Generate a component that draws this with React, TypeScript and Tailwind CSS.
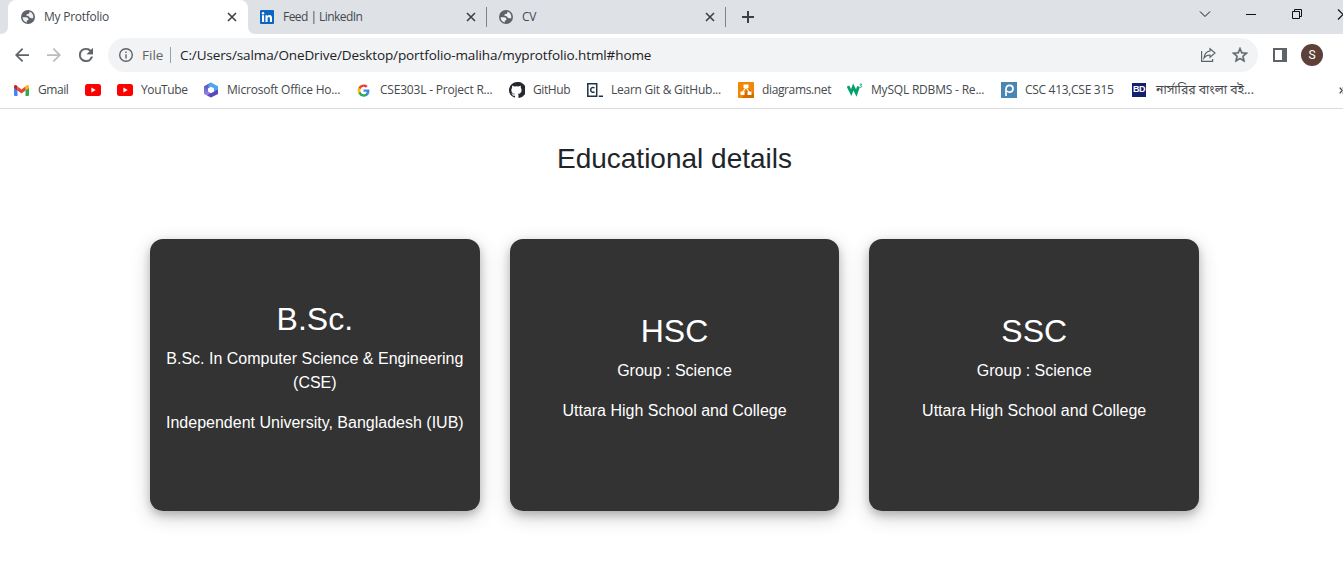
import React from "react";

const ui = "font-['Open_Sans','Noto_Sans',sans-serif]";

function Globe() {
  return (
    <svg className="size-[14px] shrink-0" viewBox="0 0 14 14">
      <circle cx="7" cy="7" r="7" fill="#5f6368" />
      <path d="M1.600 7.200H5c2 0 2.400 1.200 2.400 2 0 1-.6 1.400-1.600 1.400v1.800C3 11.800 1.600 9.600 1.600 7.200zM8.400 1.600C8.600 3.200 8.200 4 7 4 5.800 4 5.200 4.600 5.200 5.600c1.800 0 2.600.8 3.400 2 .6.800 1.800.6 3.600.6C12.800 5 11 2.400 8.400 1.600z" fill="#eef0f2" />
    </svg>
  );
}

function Close() {
  return (
    <svg className="size-[10px] shrink-0" viewBox="0 0 10 10" stroke="#3c4043" strokeWidth="1.600">
      <path d="M1 1l8 8M9 1L1 9" />
    </svg>
  );
}

function YouTube() {
  return (
    <svg className="h-[12px] w-4 shrink-0" viewBox="0 0 16 12">
      <rect width="16" height="12" rx="2.500" fill="#f00" />
      <path d="M6.400 3.500v5L10.700 6z" fill="#fff" />
    </svg>
  );
}

function Tabs() {
  return (
    <div className="flex h-[34px] bg-[#dee1e6]">
      <div className="flex w-2 items-end bg-white">
        <div className="h-full w-full rounded-br-[7px] bg-[#dee1e6]" />
      </div>
      <div className="flex h-full w-60 items-center rounded-t-lg bg-white pl-[13px] pr-[11px]">
        <Globe />
        <span className="ml-[9px] flex-1 tracking-[-0.25px]">My Protfolio</span>
        <Close />
      </div>
      <div className="flex w-2 bg-white">
        <div className="h-full w-full rounded-bl-[7px] bg-[#dee1e6]" />
      </div>
      <div className="flex w-[230px] items-center pl-1 pr-[10px]">
        <svg className="size-[14px] shrink-0" viewBox="0 0 14 14">
          <rect width="14" height="14" rx="1" fill="#0a66c2" />
          <path d="M2 5.300h2.100V12H2zM5.500 5.300h2v.9c.4-.7 1.100-1.100 2-1.100 2 0 2.500 1.300 2.500 3.200V12H9.900V8.700c0-.9-.1-1.700-1.100-1.700S7.600 7.800 7.600 8.700V12H5.500z" fill="#fff" />
          <circle cx="3.050" cy="3.200" r="1.200" fill="#fff" />
        </svg>
        <span className="ml-[9px] flex-1 tracking-[-0.55px]">Feed | LinkedIn</span>
        <Close />
      </div>
      <div className="my-[7px] w-px bg-[#808388]" />
      <div className="flex w-[238px] items-center pl-3 pr-[10px]">
        <Globe />
        <span className="ml-[9px] flex-1 tracking-[-0.3px]">CV</span>
        <Close />
      </div>
      <div className="my-[7px] w-px bg-[#808388]" />
      <div className="flex items-center pl-4">
        <svg className="size-3" viewBox="0 0 12 12" stroke="#3c4043" strokeWidth="2">
          <path d="M6 0v12M0 6h12" />
        </svg>
      </div>
      <div className="ml-auto flex w-[144px] pt-2">
        <svg className="h-3 w-[144px]" viewBox="0 0 144 12" fill="none" stroke="#111" strokeWidth="1">
          <path d="M1 3.500l5 5 5-5M47 6.500h10M93.500 3.500h7v7h-7zM95.500 3.500v-2h7v7h-2" />
          <path d="M139 1.500l10 10M139 11.500l10-10" strokeWidth="1.200" />
        </svg>
      </div>
    </div>
  );
}

function Toolbar() {
  return (
    <div className="flex h-[42px] items-center">
      <svg className="ml-[15px] size-[14px]" viewBox="4 4 16 16" fill="#5f6368">
        <path d="M20 11H7.830l5.590-5.590L12 4l-8 8 8 8 1.410-1.410L7.830 13H20v-2z" />
      </svg>
      <svg className="ml-[18px] size-[14px]" viewBox="4 4 16 16" fill="#babcbe">
        <path d="M12 4l-1.410 1.410L16.170 11H4v2h12.170l-5.580 5.590L12 20l8-8z" />
      </svg>
      <svg className="ml-[18px] size-[14px]" viewBox="4 4 16 16" fill="#5f6368" stroke="#5f6368" strokeWidth=".4">
        <path d="M17.650 6.350A7.950 7.950 0 0 0 12 4a8 8 0 1 0 7.730 10h-2.080A6 6 0 1 1 12 6c1.660 0 3.140.690 4.220 1.780L13 11h7V4l-2.350 2.350z" />
      </svg>
      <div className="ml-[15px] flex h-[34px] w-[1150px] items-center rounded-full bg-[#f1f3f4] pl-[11px] pr-[10px] text-[14px]">
        <svg className="size-[14px]" viewBox="2 2 20 20" fill="#5f6368">
          <path d="M11 7h2v2h-2zm0 4h2v6h-2zm1-9a10 10 0 1 0 0 20 10 10 0 0 0 0-20zm0 18a8 8 0 1 1 0-16 8 8 0 0 1 0 16z" />
        </svg>
        <span className="ml-[9px] w-[20px] whitespace-nowrap pt-px text-[13.500px] text-[#5f6368]">File</span>
        <div className="ml-2 h-4 w-px bg-[#9aa0a6]" />
        <span className="ml-[9px] flex-1 whitespace-nowrap pt-px text-[13.500px] tracking-[-0.11px] text-[#202124]">C:/Users/salma/OneDrive/Desktop/portfolio-maliha/myprotfolio.html#home</span>
        <svg className="size-4" viewBox="0 0 16 16" fill="none" stroke="#5f6368" strokeWidth="1.200">
          <path d="M1.600 4v10.400h11V12M10 1.800l5 4.200-5 4.200V8C7 8 5.400 9 4 11c.4-4 2.500-6.500 6-7z" />
        </svg>
        <svg className="ml-4 size-4" viewBox="2 2 20 20" fill="#5f6368" stroke="#5f6368" strokeWidth=".4">
          <path d="M22 9.240l-7.190-.620L12 2 9.190 8.630 2 9.240l5.460 4.730L5.820 21 12 17.270 18.180 21l-1.630-7.030L22 9.240zM12 15.400l-3.760 2.270 1-4.280-3.320-2.880 4.380-.380L12 6.100l1.710 4.040 4.380.380-3.320 2.880 1 4.280L12 15.400z" />
        </svg>
      </div>
      <svg className="ml-[15px] h-[14px] w-[14px]" viewBox="0 0 14 14">
        <path fillRule="evenodd" fill="#5f6368" d="M0 0h14v14H0zM2 2v10h7V2z" />
      </svg>
      <div className="ml-[14px] flex size-[22px] items-center justify-center rounded-full bg-[#5d4037] font-[Roboto,sans-serif] text-[12px] text-white">S</div>
    </div>
  );
}

function Bookmark({ w, gap, icon, children, text }: { w: string; gap: string; icon: React.ReactNode; children?: React.ReactNode; text: string }) {
  return (
    <div className={`flex shrink-0 items-center ${w} ${gap}`}>
      {icon}
      <span className={`whitespace-nowrap ${text}`}>{children}</span>
    </div>
  );
}

function Bookmarks() {
  return (
    <div className="flex h-[33px] items-center overflow-hidden border-b border-[#dadce0] pb-1 pl-[14px]">
      <Bookmark w="w-[71px]" gap="gap-[9px]" text="tracking-[-0.45px]" icon={
        <svg className="h-[11px] w-[15px] shrink-0" viewBox="0 0 15 11">
          <path d="M0 2v8a1 1 0 0 0 1 1h2.500V4z" fill="#4285f4" />
          <path d="M15 2v8a1 1 0 0 1-1 1h-2.500V4z" fill="#34a853" />
          <path d="M11.500 1.400V5.500L15 3V1.600C15 0 13.300-.5 12.200.5z" fill="#fbbc04" />
          <path d="M0 1.600V3l3.500 2.500V1.400L2.800.5C1.700-.5 0 0 0 1.600z" fill="#c5221f" />
          <path d="M3.500 1.400l4 3 4-3v4.100l-4 3-4-3z" fill="#ea4335" />
        </svg>}>Gmail</Bookmark>
      <Bookmark w="w-8" gap="gap-0" text="" icon={<YouTube />} />
      <Bookmark w="w-[86px]" gap="gap-2" text="tracking-[-0.4px]" icon={<YouTube />}>YouTube</Bookmark>
      <Bookmark w="w-[153px]" gap="gap-2" text="tracking-[-0.2px]" icon={
        <svg className="h-4 w-4 shrink-0" viewBox="0 0 16 16">
          <defs>
            <linearGradient id="officeLeft" x1="0" y1="0" x2="0" y2="1">
              <stop offset="0" stopColor="#3454b4" />
              <stop offset="1" stopColor="#b58af0" />
            </linearGradient>
          </defs>
          <path d="M8 .5L1 4.300v7.600L8 15.500 8 11 5.200 9.500v-3L9 4z" fill="url(#officeLeft)" />
          <path d="M8 .5l7 3.800v5.500L10.800 9.500v-3L8 5 5.500 6V2z" fill="#55a5ee" />
          <path d="M15 7.500v4.400L8 15.500l-4-2.200L10.800 9.500z" fill="#5a48bd" />
          <path d="M8 5l2.800 1.500v3L8 11 5.200 9.500v-3z" fill="#fff" />
        </svg>}>Microsoft Office Ho...</Bookmark>
      <Bookmark w="w-[153px]" gap="gap-[10px]" text="tracking-[-0.2px]" icon={
        <svg className="ml-[1px] size-[13px] shrink-0" viewBox="0 0 24 24">
          <path fill="#4285f4" d="M23 12.300c0-.8-.1-1.500-.2-2.300H12v4.500h6.200a5.300 5.300 0 0 1-2.300 3.500v2.900h3.700c2.200-2 3.400-5 3.400-8.600z" />
          <path fill="#34a853" d="M12 23.500c3.100 0 5.700-1 7.600-2.800l-3.700-2.900c-3.600 2.300-8.100.7-9.400-3.300H2.700v3a11.500 11.500 0 0 0 9.300 6z" />
          <path fill="#fbbc05" d="M6.500 14.500a7 7 0 0 1 0-5v-3H2.700a11.500 11.500 0 0 0 0 11z" />
          <path fill="#ea4335" d="M12 5.100c1.700 0 3.200.6 4.400 1.700l3.300-3.300C14.600-1.200 6 .2 2.700 6.500l3.800 3C7.400 6.900 9.500 5.100 12 5.100z" />
        </svg>}>CSE303L - Project R...</Bookmark>
      <Bookmark w="w-[78px]" gap="gap-2" text="tracking-[-0.4px]" icon={
        <svg className="size-4 shrink-0" viewBox="0 0 16 16" fill="#24292f">
          <path d="M8 0a8 8 0 0 0-2.530 15.590c.4.070.55-.170.55-.380v-1.490c-2.010.370-2.530-.490-2.690-.940-.36-1.250-1.380-1.510-.82-1.530 1.250 0 1.300 1.540 2.610 1.200.45-.110.720-.450.870-.580-1.780-.2-3.640-.890-3.640-3.950 0-.870.310-1.590.820-2.150-.08-.2-.360-1.020.080-2.120 0 0 .67-.210 2.200.820a7.600 7.600 0 0 1 4 0c1.530-1.040 2.200-.820 2.200-.820.440 1.100.160 1.920.080 2.120.510.560.820 1.270.820 2.150 0 3.070-1.870 3.750-3.650 3.950.290.250.540.730.540 1.480v2.200c0 .210.150.460.550.380A8 8 0 0 0 8 0z" />
        </svg>}>GitHub</Bookmark>
      <Bookmark w="w-[151px]" gap="gap-2" text="tracking-[-0.25px]" icon={
        <svg className="size-4 shrink-0" viewBox="0 0 16 16" fill="none" stroke="#1e3147" strokeWidth="1.500">
          <path d="M.8 1.700h8.900v12.500H.8zM7.500 6C6 5 3.700 5.500 3.700 7.900s2.300 2.900 3.800 1.900M11.800 14.200H16" />
        </svg>}>Learn Git &amp; GitHub...</Bookmark>
      <Bookmark w="w-[109px]" gap="gap-2" text="tracking-[-0.37px]" icon={
        <svg className="size-4 shrink-0" viewBox="0 0 16 16">
          <rect width="16" height="16" rx="1" fill="#f08705" />
          <path d="M10 6l6 6v3a1 1 0 0 1-1 1H4z" fill="#d76b00" />
          <path d="M5.500 2.500h5v3.500h-5zM2.500 9.500h4v3.500h-4zM9.500 9.500h4v3.500h-4z" fill="#fff" />
          <path d="M8 5l-3.500 5.500M8 5l3.500 5.500" stroke="#fff" strokeWidth="1.200" />
        </svg>}>diagrams.net</Bookmark>
      <Bookmark w="w-[154px]" gap="gap-2" text="tracking-[-0.2px]" icon={
        <svg className="size-4 shrink-0" viewBox="0 0 16 16" fill="none" stroke="#04a06c">
          <path d="M1 4l3.200 6.500L6.300 5l3 6 2.200-6.500" strokeWidth="2.800" />
          <path d="M12.700 2.200h2l-1.100 1.500c1.800 0 1.300 2.200-.9 1.500" strokeWidth=".9" />
        </svg>}>MySQL RDBMS - Re...</Bookmark>
      <Bookmark w="w-[130px]" gap="gap-2" text="tracking-[-0.3px]" icon={
        <svg className="size-4 shrink-0" viewBox="0 0 16 16" fill="none">
          <rect width="16" height="16" fill="#4a86b4" />
          <path d="M5 14V7c0-5 7-4.500 7-.3 0 3.500-4 4.400-6 2.300" stroke="#fff" strokeWidth="1.700" />
        </svg>}>CSC 413,CSE 315</Bookmark>
      <Bookmark w="w-[190px]" gap="gap-[10px]" text="font-['Noto_Sans','Noto_Sans_Bengali',sans-serif] text-[12.300px]" icon={
        <span className="ml-px flex h-[14px] w-[14px] shrink-0 items-start justify-center bg-[#141f6e] pt-[2px] font-['Liberation_Sans',sans-serif] text-[9px] font-bold leading-none tracking-[-0.5px] text-white">BD</span>}>নার্সারির বাংলা বই...</Bookmark>
      <svg className="ml-auto h-[7px] w-1 shrink-0" viewBox="0 0 4 7" fill="none" stroke="#3c4043" strokeWidth="1.200">
        <path d="M.7.6l2.500 2.900L.7 6.400M3.700.6l2.500 2.900-2.500 2.900" />
      </svg>
    </div>
  );
}

function Card({ title, lines }: { title: string; lines: string[] }) {
  return (
    <div className="flex h-[272px] flex-1 flex-col items-center justify-center rounded-[13px] bg-[#333] px-[15px] text-center text-white shadow-[0_4px_8px_rgba(0,0,0,0.2),0_6px_20px_rgba(0,0,0,0.19)]">
      <h2 className="mb-[9px] text-[32px] leading-[38px]">{title}</h2>
      {lines.map((l) => (
        <p key={l} className="mb-4 text-base leading-6">{l}</p>
      ))}
    </div>
  );
}

export default function App() {
  return (
    <div className="h-[566px] w-[1343px] overflow-hidden bg-white">
      <header className={`text-[12px] text-[#45494d] ${ui}`}>
        <Tabs />
        <Toolbar />
        <Bookmarks />
      </header>
      <main className="w-[1349px] font-['Liberation_Sans',Arial,sans-serif] text-[#212529]">
        <h1 className="pt-[33px] text-center text-[28px] leading-[34px]">Educational details</h1>
        <div className="mx-[150px] mt-[63px] flex gap-[30px]">
          <Card title="B.Sc." lines={["B.Sc. In Computer Science & Engineering (CSE)", "Independent University, Bangladesh (IUB)"]} />
          <Card title="HSC" lines={["Group : Science", "Uttara High School and College"]} />
          <Card title="SSC" lines={["Group : Science", "Uttara High School and College"]} />
        </div>
      </main>
    </div>
  );
}
